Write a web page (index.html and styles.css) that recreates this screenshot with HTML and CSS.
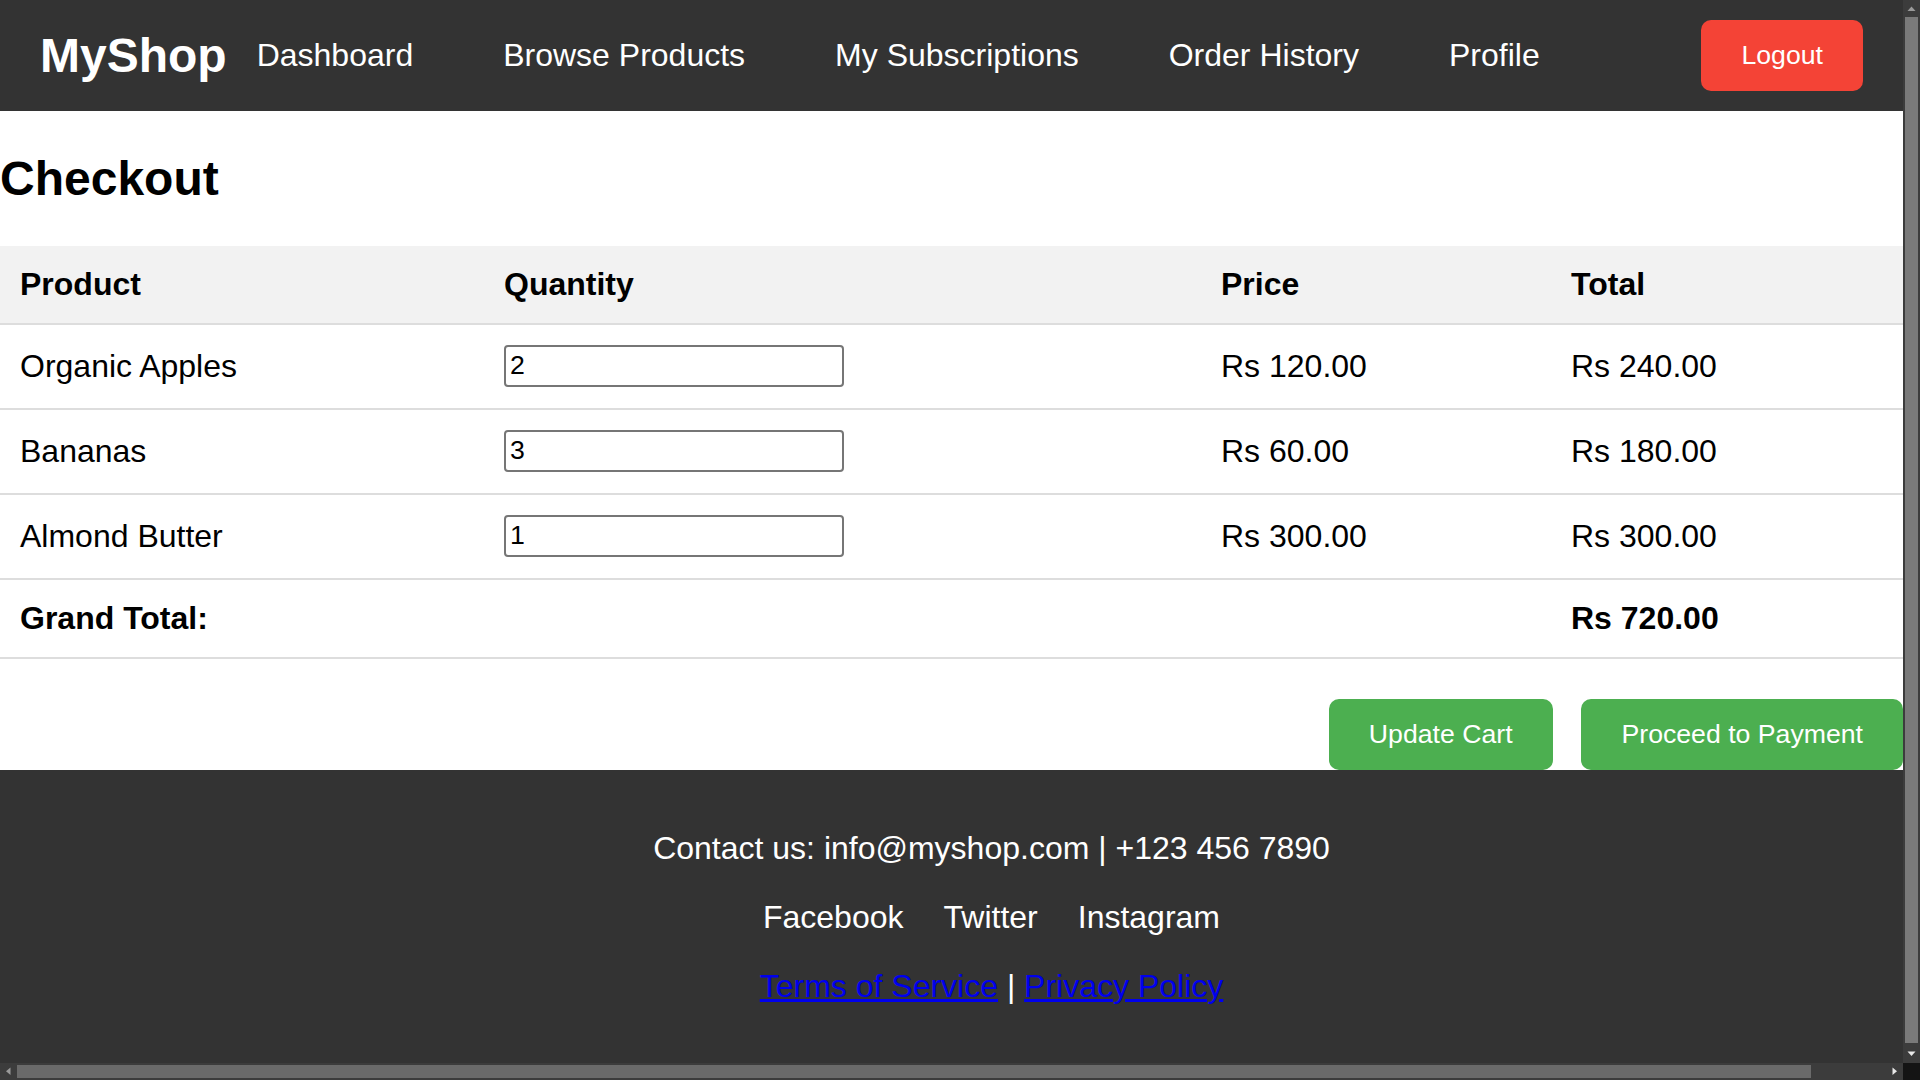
FILE: index.html
```html
<!DOCTYPE html>
<html lang="en">
<head>
<meta charset="utf-8">
<title>Checkout - MyShop</title>
<link rel="stylesheet" href="styles.css">
</head>
<body>
<header class="site-header">
  <div class="logo">MyShop</div>
  <nav class="main-nav">
    <a href="#" class="nav-link">Dashboard</a>
    <a href="#" class="nav-link">Browse Products</a>
    <a href="#" class="nav-link">My Subscriptions</a>
    <a href="#" class="nav-link">Order History</a>
    <a href="#" class="nav-link">Profile</a>
  </nav>
  <button class="logout-btn">Logout</button>
</header>

<main class="checkout">
  <h2 class="page-title">Checkout</h2>
  <table class="cart-table">
    <colgroup>
      <col class="col-product">
      <col class="col-qty">
      <col class="col-price">
      <col class="col-total">
    </colgroup>
    <thead>
      <tr>
        <th>Product</th>
        <th>Quantity</th>
        <th>Price</th>
        <th>Total</th>
      </tr>
    </thead>
    <tbody>
      <tr>
        <td>Organic Apples</td>
        <td><input class="qty-input" type="text" value="2"></td>
        <td>Rs 120.00</td>
        <td>Rs 240.00</td>
      </tr>
      <tr>
        <td>Bananas</td>
        <td><input class="qty-input" type="text" value="3"></td>
        <td>Rs 60.00</td>
        <td>Rs 180.00</td>
      </tr>
      <tr>
        <td>Almond Butter</td>
        <td><input class="qty-input" type="text" value="1"></td>
        <td>Rs 300.00</td>
        <td>Rs 300.00</td>
      </tr>
      <tr class="grand-row">
        <td colspan="3">Grand Total:</td>
        <td>Rs 720.00</td>
      </tr>
    </tbody>
  </table>
  <div class="cart-actions">
    <button class="green-btn">Update Cart</button>
    <button class="green-btn">Proceed to Payment</button>
  </div>
</main>

<footer class="site-footer">
  <p class="footer-line">Contact us: info@myshop.com | +123 456 7890</p>
  <div class="social">
    <a href="#" class="social-link">Facebook</a><a href="#" class="social-link">Twitter</a><a href="#" class="social-link">Instagram</a>
  </div>
  <p class="footer-line"><a href="#" class="legal-link">Terms of Service</a> | <a href="#" class="legal-link">Privacy Policy</a></p>
</footer>

<div class="vscroll" aria-hidden="true">
  <div class="sb-btn">
    <svg width="17" height="17" viewBox="0 0 17 17"><polygon points="4.5,11 12.5,11 8.5,6.5" fill="#9a9a9a"/></svg>
  </div>
  <div class="vtrack"><div class="vthumb"></div></div>
  <div class="sb-btn">
    <svg width="17" height="17" viewBox="0 0 17 17"><polygon points="4.5,5.5 12.5,5.5 8.5,10" fill="#e8e8e8"/></svg>
  </div>
</div>
<div class="hscroll" aria-hidden="true">
  <div class="sb-btn">
    <svg width="17" height="17" viewBox="0 0 17 17"><polygon points="10.5,4.5 10.5,12 6,8.25" fill="#9a9a9a"/></svg>
  </div>
  <div class="htrack"><div class="hthumb"></div></div>
  <div class="sb-btn">
    <svg width="17" height="17" viewBox="0 0 17 17"><polygon points="6.5,4.5 6.5,12 11,8.25" fill="#e8e8e8"/></svg>
  </div>
</div>
<div class="scroll-corner" aria-hidden="true"></div>
</body>
</html>
```

FILE: styles.css
```css
html {
  background: #ffffff;
}

body {
  margin: 0 17px 0 0;
  background: #ffffff;
  color: #000000;
  font-family: "Liberation Sans", Arial, sans-serif;
  font-size: 32px;
}

/* Header */
.site-header {
  display: flex;
  align-items: center;
  background: #333333;
  padding: 20px 40px;
}

.logo {
  color: #ffffff;
  font-size: 48px;
  font-weight: bold;
}

.main-nav {
  display: flex;
  gap: 90px;
  margin-left: 30px;
}

.nav-link {
  color: #ffffff;
  text-decoration: none;
  font-size: 32px;
}

.logout-btn {
  margin-left: auto;
  background: #f44336;
  color: #ffffff;
  border: none;
  border-radius: 10px;
  padding: 20px 40px;
  font-family: "Liberation Sans", Arial, sans-serif;
  font-size: 26.67px;
}

/* Main */
.checkout {
  background: #ffffff;
}

.page-title {
  font-size: 48px;
  font-weight: bold;
  margin: 39.84px 0;
}

.cart-table {
  width: 100%;
  border-collapse: collapse;
  table-layout: fixed;
}

.col-product { width: 484px; }
.col-qty { width: 717px; }
.col-price { width: 350px; }

.cart-table th,
.cart-table td {
  padding: 20px;
  text-align: left;
  border-bottom: 2px solid #dddddd;
  color: #000000;
}

.cart-table th {
  background: #f2f2f2;
  font-weight: bold;
}

.grand-row td {
  font-weight: bold;
}

.qty-input {
  box-sizing: border-box;
  width: 340px;
  height: 42px;
  margin: 0 0 1px 0;
  padding: 2px 4px;
  border: 2px solid #767676;
  border-radius: 4px;
  background: #ffffff;
  color: #000000;
  font-family: "Liberation Sans", Arial, sans-serif;
  font-size: 26.67px;
}

.cart-actions {
  text-align: right;
  margin-top: 40px;
}

.green-btn {
  background: #4caf50;
  color: #ffffff;
  border: none;
  border-radius: 10px;
  padding: 20px 40px;
  margin-left: 20px;
  font-family: "Liberation Sans", Arial, sans-serif;
  font-size: 26.67px;
}

/* Footer */
.site-footer {
  width: 100%;
  background: #333333;
  color: #ffffff;
  text-align: center;
  padding: 28px 40px;
}

.footer-line {
  margin: 32px 0;
}

.social {
  display: flex;
  justify-content: center;
  gap: 40px;
  margin: 32px 0;
}

.social-link {
  color: #ffffff;
  text-decoration: none;
}

.legal-link {
  color: #0000ee;
  text-decoration: underline;
}

/* Window scrollbars (drawn over the page) */
.vscroll {
  position: fixed;
  top: 0;
  right: 0;
  width: 17px;
  height: 1063px;
  background: #3c3c3c;
  display: flex;
  flex-direction: column;
}

.hscroll {
  position: fixed;
  left: 0;
  bottom: 0;
  width: 1903px;
  height: 17px;
  background: #3c3c3c;
  display: flex;
}

.sb-btn {
  width: 17px;
  height: 17px;
  flex: none;
}

.sb-btn svg {
  display: block;
}

.vtrack {
  flex: 1;
  padding: 0 2px;
}

.vthumb {
  height: 1026px;
  margin-top: 0.3px;
  background: #7a7a7a;
}

.htrack {
  flex: 1;
  padding: 2px 0;
}

.hthumb {
  width: 1794px;
  height: 13px;
  background: #6a6a6a;
}

.scroll-corner {
  position: fixed;
  right: 0;
  bottom: 0;
  width: 17px;
  height: 17px;
  background: #141414;
}
```
